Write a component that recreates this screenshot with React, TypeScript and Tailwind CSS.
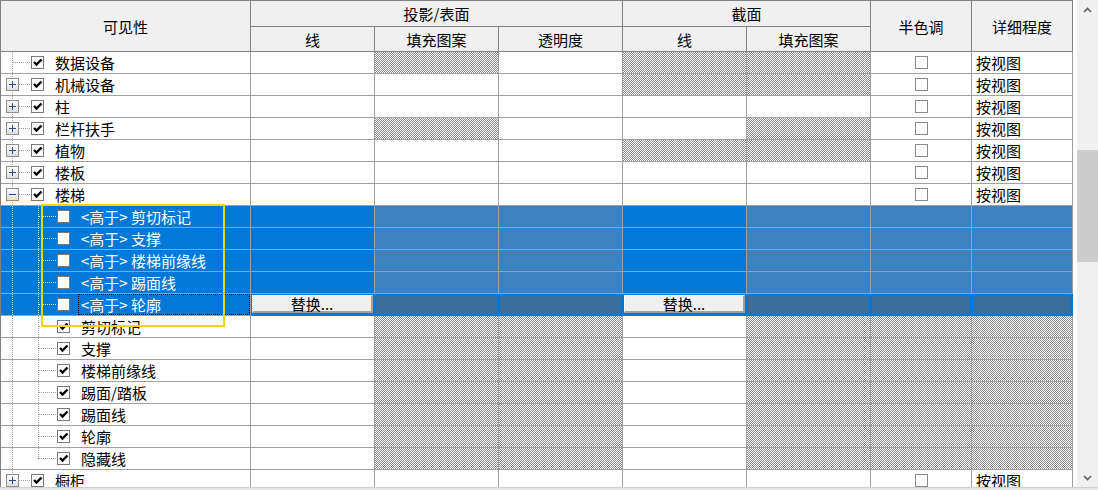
import React from 'react'

const COLS = 'grid grid-cols-[250px_124px_124px_124px_124px_124px_101px_101px]'
const FONT = "font-['Noto_Sans_CJK_SC','Noto_Sans',sans-serif]"

type Row = {
    label: string
    level: 1 | 2
    exp?: 'plus' | 'minus'
    checked: boolean
    hatch: number[]
    sel?: boolean
    focus?: boolean
    last?: boolean
}

const CHILD_HATCH = [2, 3, 5, 6, 7]

const rows: Row[] = [
    { label: '数据设备', level: 1, checked: true, hatch: [2, 4, 5] },
    { label: '机械设备', level: 1, exp: 'plus', checked: true, hatch: [4, 5] },
    { label: '柱', level: 1, exp: 'plus', checked: true, hatch: [] },
    { label: '栏杆扶手', level: 1, exp: 'plus', checked: true, hatch: [2, 5] },
    { label: '植物', level: 1, exp: 'plus', checked: true, hatch: [4, 5] },
    { label: '楼板', level: 1, exp: 'plus', checked: true, hatch: [] },
    { label: '楼梯', level: 1, exp: 'minus', checked: true, hatch: [] },
    { label: '<高于> 剪切标记', level: 2, checked: false, hatch: CHILD_HATCH, sel: true },
    { label: '<高于> 支撑', level: 2, checked: false, hatch: CHILD_HATCH, sel: true },
    { label: '<高于> 楼梯前缘线', level: 2, checked: false, hatch: CHILD_HATCH, sel: true },
    { label: '<高于> 踢面线', level: 2, checked: false, hatch: CHILD_HATCH, sel: true },
    { label: '<高于> 轮廓', level: 2, checked: false, hatch: CHILD_HATCH, sel: true, focus: true },
    { label: '剪切标记', level: 2, checked: true, hatch: CHILD_HATCH },
    { label: '支撑', level: 2, checked: true, hatch: CHILD_HATCH },
    { label: '楼梯前缘线', level: 2, checked: true, hatch: CHILD_HATCH },
    { label: '踢面/踏板', level: 2, checked: true, hatch: CHILD_HATCH },
    { label: '踢面线', level: 2, checked: true, hatch: CHILD_HATCH },
    { label: '轮廓', level: 2, checked: true, hatch: CHILD_HATCH },
    { label: '隐藏线', level: 2, checked: true, hatch: CHILD_HATCH, last: true },
    { label: '橱柜', level: 1, exp: 'plus', checked: true, hatch: [] },
]

// checker pattern for grey "by category" cells, defined once
const HatchDefs = () => (
    <svg width="0" height="0" className="absolute">
        <defs>
            <pattern id="hatch-w" width="2" height="2" patternUnits="userSpaceOnUse">
                <rect width="2" height="2" fill="#ffffff" />
                <rect width="1" height="1" fill="#8c8c8c" />
                <rect x="1" y="1" width="1" height="1" fill="#8c8c8c" />
            </pattern>
            <linearGradient id="expbg" x1="0" y1="0" x2="0" y2="1">
                <stop offset="0" stopColor="#ffffff" />
                <stop offset="1" stopColor="#dcdcdc" />
            </linearGradient>
        </defs>
    </svg>
)

const Hatch = () => (
    <svg width="100%" height={21} className="block" shapeRendering="crispEdges">
        <rect width="100%" height="100%" fill="url(#hatch-w)" />
    </svg>
)

const Guides = ({ row }: { row: Row }) => {
    const stroke = row.sel ? '#dbe9f7' : '#a0a0a0'
    const w = row.level === 1 ? 30 : 56
    return (
        <svg width={w} height={21} className="shrink-0">
            <line x1={11.5} y1={0} x2={11.5} y2={21} stroke={stroke} strokeDasharray="1 1" />
            {row.level === 1 && <line x1={12} y1={10.5} x2={30} y2={10.5} stroke={stroke} strokeDasharray="1 1" />}
            {row.level === 2 && (
                <>
                    <line x1={37.5} y1={0} x2={37.5} y2={row.last ? 11 : 21} stroke={stroke} strokeDasharray="1 1" />
                    <line x1={38} y1={10.5} x2={56} y2={10.5} stroke={stroke} strokeDasharray="1 1" />
                </>
            )}
            {row.exp && (
                <>
                    <rect x={5.5} y={4.5} width={12} height={12} fill="url(#expbg)" stroke="#8f8f8f" />
                    <line x1={8} y1={10.5} x2={15} y2={10.5} stroke="#2b4c8c" />
                    {row.exp === 'plus' && <line x1={11.5} y1={7} x2={11.5} y2={14} stroke="#2b4c8c" />}
                </>
            )}
        </svg>
    )
}

const CheckBox = ({ checked }: { checked: boolean }) => (
    <div className="w-[13px] h-[13px] shrink-0 border border-[#7a7a7a] bg-white flex items-center justify-center">
        {checked && (
            <svg width="11" height="11" viewBox="0 0 11 11">
                <path d="M2 5 L4.5 7.5 L9.5 2.5" fill="none" stroke="#000" strokeWidth="2.4" />
            </svg>
        )}
    </div>
)

const ReplaceButton = () => (
    <div className="h-[18px] bg-[#efefef] border-t border-l border-t-white border-l-white border-r-2 border-b-2 border-r-[#a0a0a0] border-b-[#a0a0a0] flex items-center justify-center text-[15px] leading-none text-black">
        替换...
    </div>
)

const BodyRow = ({ row }: { row: Row }) => {
    const line = row.focus ? 'border-[#0078d7]' : 'border-[#a0a0a0]'
    return (
        <div className={`${COLS} h-[22px]`}>
            <div className={`h-[22px] border-r border-b border-[#a0a0a0] flex items-center overflow-hidden ${row.sel ? 'bg-[#0078d7] text-white' : 'bg-white text-black'}`}>
                <Guides row={row} />
                <CheckBox checked={row.checked} />
                <div className={`h-full flex items-center flex-1 ml-[8px] pl-[2px] pr-1 whitespace-nowrap text-[15px] leading-none border ${row.focus ? 'border-dotted border-black' : 'border-transparent'}`}>
                    {row.label}
                </div>
            </div>
            {[1, 2, 3, 4, 5, 6, 7].map(c => {
                const hatched = row.hatch.includes(c)
                if (row.focus) {
                    if (c === 1 || c === 4) {
                        return (
                            <div key={c} className={`h-[22px] border-r border-b ${line} bg-[#0078d7] px-px pt-px`}>
                                <ReplaceButton />
                            </div>
                        )
                    }
                    return (
                        <div key={c} className={`h-[22px] border-r border-b ${line} bg-[#0078d7] p-px`}>
                            <div className="h-full bg-[#3a6e9c]" />
                        </div>
                    )
                }
                if (hatched) {
                    if (row.sel) {
                        return <div key={c} className={`h-[22px] border-r border-b ${line} bg-[#3c82c2]`} />
                    }
                    return (
                        <div key={c} className={`h-[22px] border-r border-b ${line} overflow-hidden`}>
                            <Hatch />
                        </div>
                    )
                }
                return (
                    <div key={c} className={`h-[22px] border-r border-b ${line} ${row.sel ? 'bg-[#0078d7]' : 'bg-white'} flex items-center ${c === 6 ? 'justify-center' : ''}`}>
                        {c === 6 && row.level === 1 && <div className="w-[13px] h-[13px] border border-[#8a8a8a] bg-white" />}
                        {c === 7 && row.level === 1 && <span className="pl-[4px] text-[15px] leading-none text-black">按视图</span>}
                    </div>
                )
            })}
        </div>
    )
}

const Header = () => {
    const cell = 'border-r border-b border-[#828282] bg-[#f0f0f0] flex items-center justify-center text-[15px] leading-none text-black'
    return (
        <div className={`${COLS} grid-rows-[26px_25px]`}>
            <div className={`${cell} row-span-2`}>可见性</div>
            <div className={`${cell} col-span-3`}>投影/表面</div>
            <div className={`${cell} col-span-2`}>截面</div>
            <div className={`${cell} row-span-2`}>半色调</div>
            <div className={`${cell} row-span-2`}>详细程度</div>
            <div className={cell}>线</div>
            <div className={cell}>填充图案</div>
            <div className={cell}>透明度</div>
            <div className={cell}>线</div>
            <div className={cell}>填充图案</div>
        </div>
    )
}

const Caret = ({ down }: { down?: boolean }) => (
    <svg width="9" height="6" viewBox="0 0 9 6">
        <path d={down ? 'M1 1 L4.5 4.5 L8 1' : 'M1 5 L4.5 1.5 L8 5'} fill="none" stroke="#606060" strokeWidth="1.6" />
    </svg>
)

const App = () => {
    return (
        <div className={`relative w-[1098px] h-[490px] bg-white overflow-hidden flex ${FONT}`}>
            <HatchDefs />
            {/* table */}
            <div className="w-[1073px] h-[490px] border-l border-t border-[#828282] overflow-hidden flex flex-col">
                <Header />
                <div className="flex flex-col">
                    {rows.map((r, i) => (
                        <BodyRow key={i} row={r} />
                    ))}
                </div>
            </div>
            <div className="w-[4px] bg-white" />
            {/* scrollbar */}
            <div className="w-[21px] h-[490px] bg-[#f0f0f0] flex flex-col">
                <div className="h-[17px] pt-[2px] flex items-center justify-center">
                    <Caret />
                </div>
                <div className="h-[133px]" />
                <div className="h-[112px] bg-[#cdcdcd]" />
                <div className="flex-1" />
                <div className="h-[22px] pb-[2px] flex items-center justify-center">
                    <Caret down />
                </div>
            </div>
            <div className="absolute left-0 bottom-0 w-[1098px] h-[3px] bg-[#e6e6e6] border-t border-[#d0d0d0]" />

            {/* highlight annotation */}
            <div className="absolute left-[41px] top-[204px] w-[184px] h-[123px] border-2 border-[#f5d400]" />
        </div>
    )
}

export default App
